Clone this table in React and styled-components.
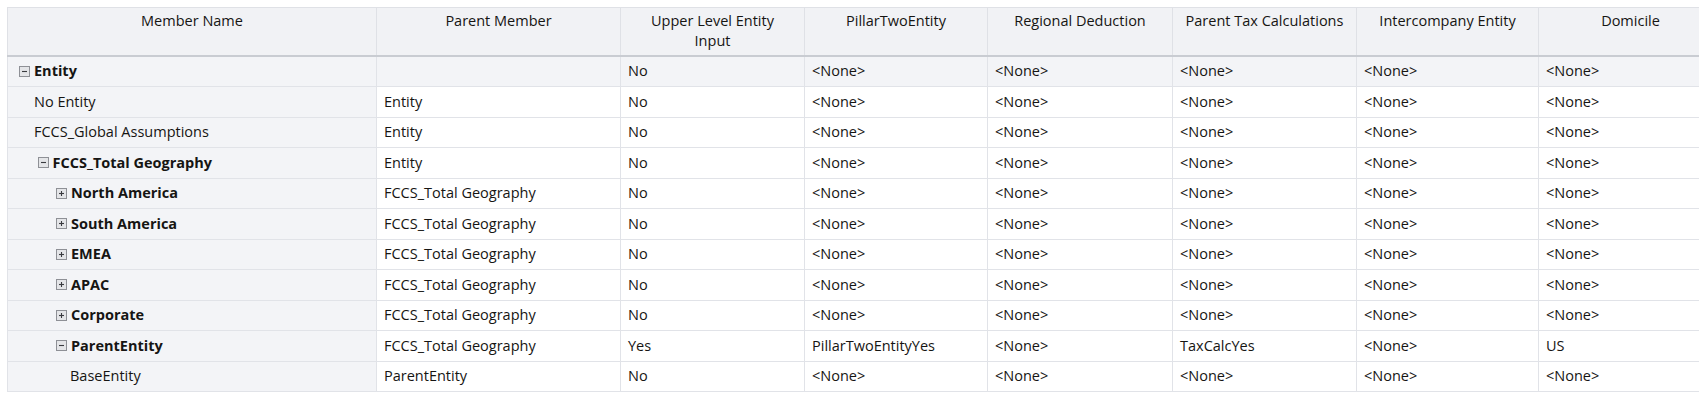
import React from "react";
import styled, { createGlobalStyle } from "styled-components";

const GlobalStyle = createGlobalStyle`
  body {
    margin: 0;
    background: #ffffff;
    font-family: "Open Sans", Lato, "Liberation Sans", sans-serif;
    color: #161513;
  }
`;

const Page = styled.div`
  padding: 7px 0 0 7px;
  overflow: hidden;
  width: 1692px;
  height: 387px;
`;

const Table = styled.table`
  border-collapse: collapse;
  table-layout: fixed;
  width: 1715px;
  font-size: 14.5px;
`;

const HeadCell = styled.th`
  background: #f1f2f5;
  font-weight: 400;
  text-align: center;
  vertical-align: top;
  padding: 3px ${(p) => (p.$wrap ? 18 : 2)}px 0;
  white-space: ${(p) => (p.$wrap ? "normal" : "nowrap")};
  height: 48.5px;
  line-height: 20px;
  border: 1px solid #dfe1e6;
  border-bottom: 2px solid #c9ccd2;
  box-sizing: border-box;
`;

const Cell = styled.td`
  background: ${(p) => (p.$shade ? "#f3f4f7" : "#ffffff")};
  height: 30.5px;
  padding: 0 6px 0 ${(p) => p.$indent || 7}px;
  border: 1px solid #e1e3e8;
  box-sizing: border-box;
  white-space: nowrap;
  overflow: hidden;
  font-weight: ${(p) => (p.$bold ? 700 : 400)};
  line-height: 1;
`;

const NameWrap = styled.span`
  display: inline-flex;
  align-items: center;
  gap: 4px;
`;

const Toggle = styled.span`
  display: inline-flex;
  width: 11px;
  height: 11px;
  box-sizing: border-box;
  border: 1px solid #8e9096;
  background: #e4e5e8;
  align-items: center;
  justify-content: center;
`;

const ToggleIcon = ({ open }) => (
  <Toggle>
    <svg width="9" height="9" viewBox="0 0 9 9">
      <line x1="2" y1="4.5" x2="7" y2="4.5" stroke="#3a3b3f" strokeWidth="1.1" />
      {!open && <line x1="4.5" y1="2" x2="4.5" y2="7" stroke="#3a3b3f" strokeWidth="1.1" />}
    </svg>
  </Toggle>
);

const columns = [
  { title: "Member Name", width: 369 },
  { title: "Parent Member", width: 244 },
  { title: "Upper Level Entity Input", width: 184, wrap: true },
  { title: "PillarTwoEntity", width: 183 },
  { title: "Regional Deduction", width: 185 },
  { title: "Parent Tax Calculations", width: 184 },
  { title: "Intercompany Entity", width: 182 },
  { title: "Domicile", width: 184 },
];

const N = "<None>";
const rows = [
  { name: "Entity", level: 0, toggle: "open", parent: "", vals: ["No", N, N, N, N, N], shade: true },
  { name: "No Entity", level: 1, parent: "Entity", vals: ["No", N, N, N, N, N] },
  { name: "FCCS_Global Assumptions", level: 1, parent: "Entity", vals: ["No", N, N, N, N, N] },
  { name: "FCCS_Total Geography", level: 1, toggle: "open", parent: "Entity", vals: ["No", N, N, N, N, N] },
  { name: "North America", level: 2, toggle: "closed", parent: "FCCS_Total Geography", vals: ["No", N, N, N, N, N] },
  { name: "South America", level: 2, toggle: "closed", parent: "FCCS_Total Geography", vals: ["No", N, N, N, N, N] },
  { name: "EMEA", level: 2, toggle: "closed", parent: "FCCS_Total Geography", vals: ["No", N, N, N, N, N] },
  { name: "APAC", level: 2, toggle: "closed", parent: "FCCS_Total Geography", vals: ["No", N, N, N, N, N] },
  { name: "Corporate", level: 2, toggle: "closed", parent: "FCCS_Total Geography", vals: ["No", N, N, N, N, N] },
  { name: "ParentEntity", level: 2, toggle: "open", parent: "FCCS_Total Geography", vals: ["Yes", "PillarTwoEntityYes", N, "TaxCalcYes", N, "US"] },
  { name: "BaseEntity", level: 3, parent: "ParentEntity", vals: ["No", N, N, N, N, N] },
];

const indentFor = (r) => (r.toggle ? 11 + r.level * 18.5 : 26 + (r.level - 1) * 18);

export default function App() {
  return (
    <Page>
      <GlobalStyle />
      <Table>
        <colgroup>
          {columns.map((c) => (
            <col key={c.title} style={{ width: c.width }} />
          ))}
        </colgroup>
        <thead>
          <tr>
            {columns.map((c) => (
              <HeadCell key={c.title} $wrap={c.wrap}>{c.title}</HeadCell>
            ))}
          </tr>
        </thead>
        <tbody>
          {rows.map((r) => (
            <tr key={r.name}>
              <Cell $shade $bold={!!r.toggle} $indent={indentFor(r)}>
                <NameWrap>
                  {r.toggle && <ToggleIcon open={r.toggle === "open"} />}
                  {r.name}
                </NameWrap>
              </Cell>
              <Cell $shade={r.shade}>{r.parent}</Cell>
              {r.vals.map((v, i) => (
                <Cell key={i} $shade={r.shade}>{v}</Cell>
              ))}
            </tr>
          ))}
        </tbody>
      </Table>
    </Page>
  );
}
